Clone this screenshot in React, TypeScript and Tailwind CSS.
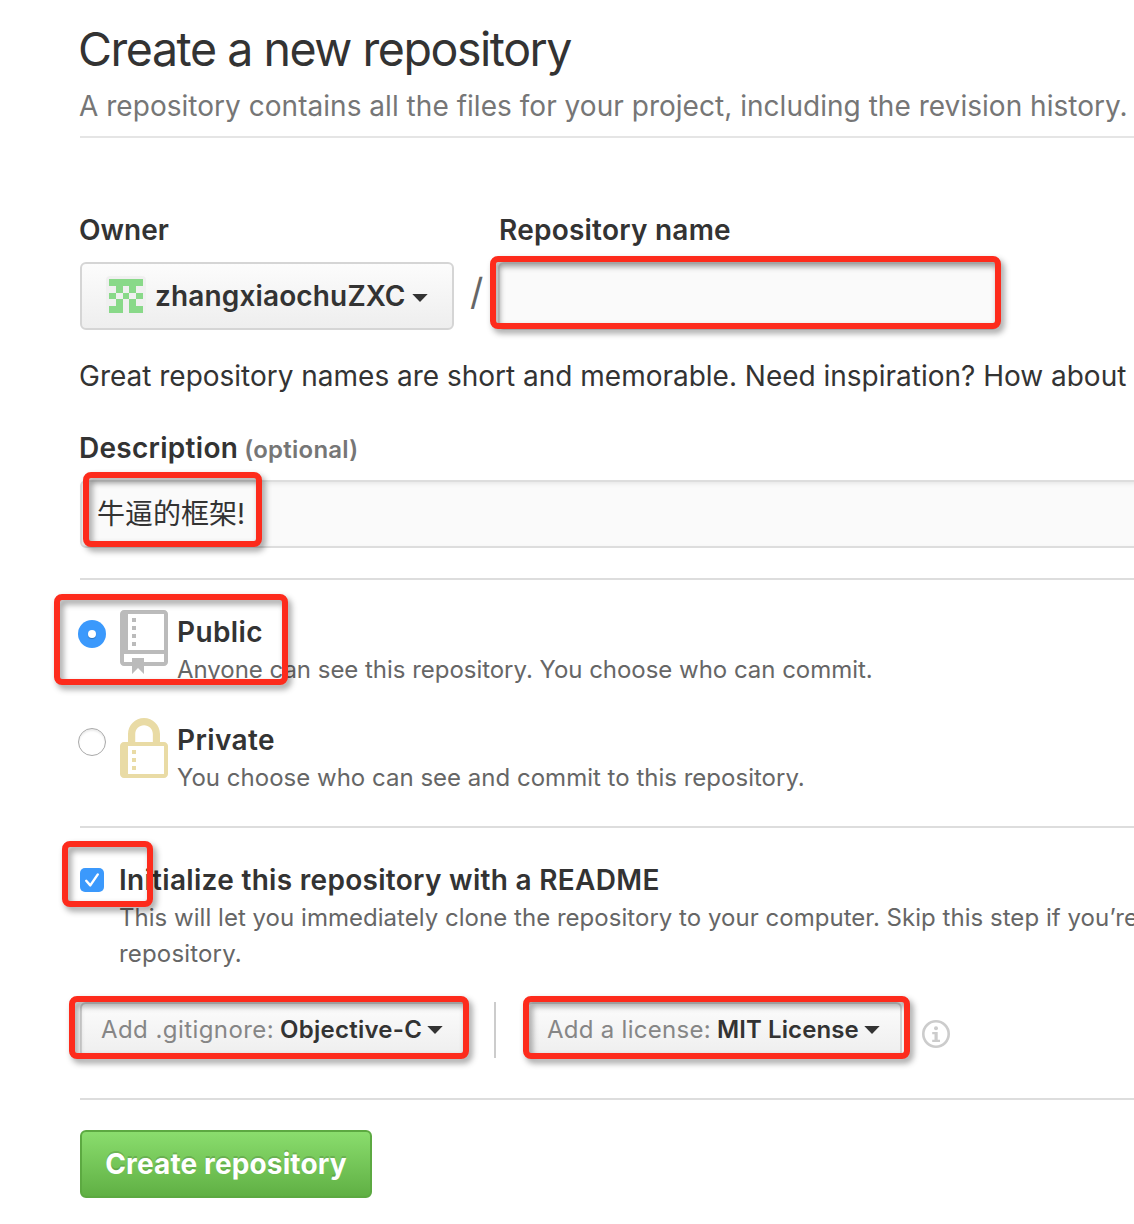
import type { ReactNode } from 'react'

function Highlight({ className }: { className: string }) {
  return (
    <div
      className={`pointer-events-none absolute z-10 rounded-[8px] border-6 border-[#fd2b1c] drop-shadow-[3px_4px_3px_rgba(0,0,0,0.4)] ${className}`}
    />
  )
}

function Caret({ className = '' }: { className?: string }) {
  return (
    <svg className={`h-2 w-4 shrink-0 ${className}`} viewBox="0 0 16 8" fill="#333">
      <path d="M0.3 0h15.4L8 8z" />
    </svg>
  )
}

function Identicon() {
  const rows = ['11111', '01010', '10101', '01010', '11011']
  return (
    <svg className="-my-1 size-10 shrink-0" viewBox="0 0 40 40">
      <rect width="40" height="40" rx="4" fill="#f0f0f0" />
      <g shapeRendering="crispEdges" fill="#89d989">
        {rows.map((row, y) =>
          row
            .split('')
            .map((cell, x) =>
              cell === '1' ? <rect key={`${x}-${y}`} x={3 + x * 6.8} y={3 + y * 6.8} width="6.8" height="6.8" /> : null,
            ),
        )}
      </g>
    </svg>
  )
}

function RepoIcon() {
  return (
    <svg className="h-16 w-12 shrink-0" viewBox="0 0 12 16" fill="#bbb">
      <path
        fillRule="evenodd"
        d="M4 9H3V8h1v1zm0-3H3v1h1V6zm0-2H3v1h1V4zm0-2H3v1h1V2zm8-1v12c0 .55-.45 1-1 1H6v2l-1.5-1.5L3 16v-2H1c-.55 0-1-.45-1-1V1c0-.55.45-1 1-1h10c.55 0 1 .45 1 1zm-1 10H1v2h2v-1h3v1h5v-2zm0-10H2v9h9V1z"
      />
    </svg>
  )
}

function LockIcon() {
  return (
    <svg className="h-16 w-12 shrink-0" viewBox="0 0 12 16" fill="#e9dba5">
      <path
        fillRule="evenodd"
        d="M4 13H3v-1h1v1zm8-6v7c0 .55-.45 1-1 1H1c-.55 0-1-.45-1-1V7c0-.55.45-1 1-1h1V4c0-2.2 1.8-4 4-4s4 1.8 4 4v2h1c.55 0 1 .45 1 1zM3.8 6h4.41V4c0-1.22-.98-2.2-2.2-2.2-1.22 0-2.2.98-2.2 2.2v2H3.8zM11 7H2v7h9V7zM4 8H3v1h1V8zm0 2H3v1h1v-1z"
      />
    </svg>
  )
}

function InfoIcon() {
  return (
    <svg className="size-7 shrink-0" viewBox="0 0 28 28" fill="#ccc">
      <circle cx="14" cy="14" r="12.7" fill="none" stroke="#ccc" strokeWidth="2.6" />
      <circle cx="14" cy="8.2" r="2" />
      <path d="M10.2 12h5.5v7.8h2.3V22h-7.8v-2.2h2.3v-5.6h-2.3z" />
    </svg>
  )
}

function Visibility({
  icon,
  title,
  note,
  checked,
}: {
  icon: ReactNode
  title: ReactNode
  note: ReactNode
  checked?: boolean
}) {
  return (
    <label className="flex h-[72px] items-start">
      {checked ? (
        <span className="-ml-0.5 mt-[10px] flex size-7 shrink-0 items-center justify-center rounded-full bg-[#3b99fc]">
          <span className="size-2 rounded-full bg-white shadow-[0_1px_1px_rgba(0,0,0,0.25)]" />
        </span>
      ) : (
        <span className="-ml-0.5 mt-[10px] size-7 shrink-0 rounded-full border border-[#a9a9a9] bg-white shadow-[inset_0_2px_2px_rgba(0,0,0,0.08)]" />
      )}
      <span className="ml-[14px] flex">{icon}</span>
      <span className="ml-[9px]">
        <span className="block h-10 text-[28px]/[45px] font-semibold tracking-[0.38px]">{title}</span>
        <span className="block text-[24px]/[39px] text-[#666]">{note}</span>
      </span>
    </label>
  )
}

function SelectButton({ label, value, className }: { label: ReactNode; value: ReactNode; className: string }) {
  return (
    <button
      className={`flex h-14 items-center rounded-md border-2 border-[#d5d5d5] bg-linear-to-b from-[#fcfcfc] to-[#eee] pl-[19px] text-[24px]/[52px] ${className}`}
    >
      {label}
      {value}
      <Caret className="ml-[5px]" />
    </button>
  )
}

export default function App() {
  return (
    <main className="h-[1224px] w-[1134px] overflow-hidden bg-white pl-20 font-['Inter','Noto_Sans_CJK_SC',sans-serif] whitespace-nowrap text-[#333]">
      <header className="h-[138px] border-b-2 border-[#e5e5e5] pt-[19px]">
        <h1 className="-ml-0.5 h-[60px] text-[46.5px]/[60px] tracking-[-1.45px]">Create a new repository</h1>
        <p className="-ml-px text-[28px]/[55px] tracking-[0.03px] text-[#767676]">
          A repository contains all the files for your project, including the revision history.
        </p>
      </header>

      <section className="flex pt-[72px]">
        <div className="w-[374px]">
          <div className="-ml-px h-[52px] text-[28px]/[41px] font-semibold">Owner</div>
          <button className="flex h-[68px] w-full items-center rounded-md border-2 border-[#d5d5d5] bg-linear-to-b from-[#fcfcfc] to-[#eee] pl-6">
            <Identicon />
            <span className="ml-[9px] text-[28px]/[66px] font-semibold tracking-[0.14px]">zhangxiaochuZXC</span>
            <Caret className="ml-[6px] mt-[3px]" />
          </button>
        </div>
        <div className="mt-[52px] w-[44px] pl-4 text-[37px]/[60px] text-[#666]">/</div>
        <div className="relative">
          <div className="ml-px h-[52px] text-[28px]/[41px] font-semibold tracking-[0.23px]">Repository name</div>
          <div className="h-[68px] w-[500px] rounded-md border-2 border-[#ddd] bg-[#fafafa] shadow-[inset_0_2px_4px_rgba(0,0,0,0.075)]" />
          <Highlight className="-left-2 top-[46px] h-[73px] w-[511px]" />
        </div>
      </section>

      <p className="-ml-px mt-[26px] h-10 text-[28px]/[41px] tracking-[-0.01px]">
        Great repository names are short and memorable. Need inspiration? How about
      </p>

      <section className="relative mt-8 h-[152px] border-b-2 border-[#ddd]">
        <div className="-ml-px flex h-[52px] items-baseline text-[28px]/[41px] font-semibold tracking-[0.28px]">
          Description
          <span className="ml-[6px] text-[24px] tracking-[0.25px] text-[#767676]">(optional)</span>
        </div>
        <div className="h-[68px] w-[1100px] rounded-md border-2 border-[#ddd] bg-[#fafafa] pl-[15px] text-[28px]/[64px] shadow-[inset_0_2px_4px_rgba(0,0,0,0.075)]">
          牛逼的框架!
        </div>
        <Highlight className="left-[3px] top-[44px] h-[75px] w-[179px]" />
      </section>

      <section className="relative h-[248px] border-b-2 border-[#ddd] pt-[30px]">
        <Visibility
          checked
          icon={<RepoIcon />}
          title="Public"
          note={<span className="tracking-[-0.03px]">Anyone can see this repository. You choose who can commit.</span>}
        />
        <div className="h-9" />
        <Visibility
          icon={<LockIcon />}
          title="Private"
          note={<span className="tracking-[0.01px]">You choose who can see and commit to this repository.</span>}
        />
        <Highlight className="-left-[26px] top-[14px] h-[91px] w-[234px]" />
      </section>

      <section className="relative h-[272px] border-b-2 border-[#ddd] pt-8">
        <label className="flex items-start">
          <span className="mt-2 flex size-6 shrink-0 items-center justify-center rounded-[5px] bg-[#3b99fc]">
            <svg className="size-6" viewBox="0 0 24 24" fill="none" stroke="#fff" strokeWidth="2.4" strokeLinecap="round" strokeLinejoin="round">
              <path d="M6.2 12.8l4.1 4.6L17.8 6.4" />
            </svg>
          </span>
          <span className="ml-[15px]">
            <span className="block h-10 text-[28px]/[41px] font-semibold tracking-[0.3px]">
              Initialize this repository with a README
            </span>
            <span className="block text-[24px]/[36px] tracking-[0.03px] text-[#666]">
              This will let you immediately clone the repository to your computer. Skip this step if you’re
              <br />
              <span className="tracking-[0.17px]">repository.</span>
            </span>
          </span>
        </label>
        <div className="mt-[30px] flex items-start">
          <SelectButton
            className="w-[387px]"
            label={<span className="tracking-[0.43px] text-[#868686]">Add .gitignore:</span>}
            value={<span className="ml-[6px] font-semibold tracking-[0.25px]">Objective-C</span>}
          />
          <div className="ml-[27px] h-14 w-0.5 bg-[#ccc]" />
          <SelectButton
            className="ml-[30px] w-[376px]"
            label={<span className="tracking-[0.28px] text-[#868686]">Add a license:</span>}
            value={<span className="ml-[6px] font-semibold tracking-[0.1px]">MIT License</span>}
          />
          <span className="ml-5 mt-[18px]">
            <InfoIcon />
          </span>
        </div>
        <Highlight className="-left-[18px] top-[13px] h-[66px] w-[91px]" />
        <Highlight className="-left-[11px] top-[168px] h-[63px] w-[400px]" />
        <Highlight className="left-[443px] top-[168px] h-[63px] w-[387px]" />
      </section>

      <button className="mt-[30px] flex h-[68px] w-[292px] items-center justify-center rounded-md border-2 border-[#5ca941] bg-linear-to-b from-[#8add6d] to-[#60b044] text-[28px]/[65px] font-bold tracking-[0.13px] text-white [text-shadow:0_-2px_0_rgba(0,0,0,0.15)]">
        Create repository
      </button>
    </main>
  )
}
